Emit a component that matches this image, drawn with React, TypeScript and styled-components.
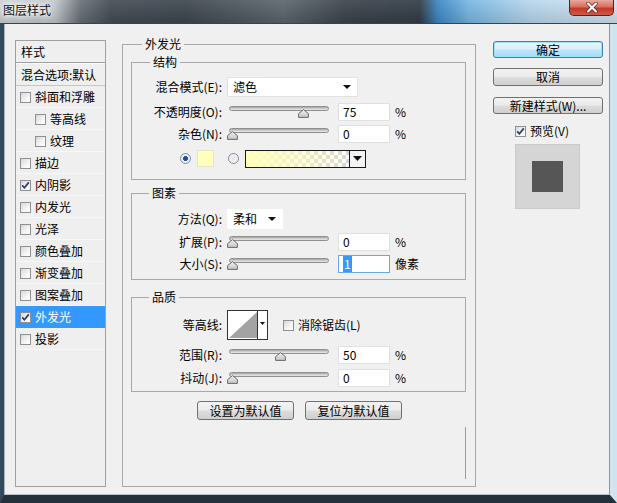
import React from 'react';
import styled, { createGlobalStyle } from 'styled-components';

const GlobalStyle = createGlobalStyle`
  html, body {
    margin: 0;
    padding: 0;
    background: #25313d;
  }
  body {
    width: 617px;
    height: 503px;
    overflow: hidden;
    font-family: "Noto Sans CJK SC", "Noto Sans", sans-serif;
    font-size: 12px;
    line-height: 16px;
    color: #000;
  }
  * {
    box-sizing: border-box;
  }
`;

const Window = styled.div`
  width: 617px;
  height: 503px;
  display: flex;
  flex-direction: column;
`;

const TitleBar = styled.div`
  height: 24px;
  flex-shrink: 0;
  display: flex;
  align-items: flex-start;
  border-bottom: 1px solid #3a434d;
  background:
    linear-gradient(to bottom, rgba(255, 255, 255, 0.08), rgba(0, 0, 0, 0.12)),
    linear-gradient(
      to right,
      #cdd1d5 0%,
      #c2c7cc 9%,
      #6a7178 13%,
      #444c55 18%,
      #3e464f 30%,
      #5d666e 46%,
      #3b434c 56%,
      #333c46 68%,
      #3c89c6 71%,
      #79b8e3 76%,
      #b9d8ee 86%,
      #d3e5f2 100%
    );
`;

const Title = styled.span`
  margin: 3px 0 0 3px;
  font-size: 12px;
  line-height: 14px;
  color: #111;
  text-shadow: 0 0 4px #fff, 0 0 6px #fff, 0 0 8px #fff;
`;

const CloseButton = styled.div`
  margin-left: auto;
  margin-right: 3px;
  width: 45px;
  height: 16px;
  border: 1px solid #5e1f1a;
  border-top: none;
  border-radius: 0 0 5px 5px;
  background: linear-gradient(to bottom, #e9a89e 0%, #d6705f 45%, #c4372a 55%, #d05a44 100%);
  display: flex;
  align-items: center;
  justify-content: center;
`;

const Frame = styled.div`
  flex: 1;
  display: flex;
  border-left: 4px solid #34495e;
  border-right: 7px solid #d2e3f0;
  border-bottom: 8px solid #24303c;
`;

const Client = styled.div`
  flex: 1;
  display: flex;
  align-items: flex-start;
  padding: 12px 6px 0 10px;
  background: #f0f0f0;
  border-left: 1px solid #a8b0b8;
  border-right: 1px solid #8a97a4;
  border-bottom: 1px solid #b7c0c9;
`;

/* ---------- left list ---------- */

const StyleList = styled.div`
  width: 91px;
  height: 447px;
  margin-top: 4px;
  flex-shrink: 0;
  border: 1px solid #a0a0a0;
  background: #efefef;
`;

const ListHeader = styled.div`
  height: 22px;
  padding-left: 5px;
  display: flex;
  align-items: center;
  border-bottom: 1px solid #a0a0a0;
`;

const BlendRow = styled.div`
  height: 23px;
  padding-left: 5px;
  display: flex;
  align-items: center;
  border-top: 1px solid #fafafa;
  border-bottom: 1px solid #c6c6c6;
  white-space: nowrap;
`;

const ListItem = styled.div<{ $indent: boolean; $selected: boolean }>`
  height: 22px;
  display: flex;
  align-items: center;
  padding-left: ${(p) => (p.$indent ? 19 : 4)}px;
  background: ${(p) => (p.$selected ? '#3399ff' : 'transparent')};
  color: ${(p) => (p.$selected ? '#fff' : '#000')};
  box-shadow: inset 0 -1px 0 ${(p) => (p.$selected ? '#3399ff' : '#f8f8f8')};
`;

const Box = styled.span<{ $gap?: number; $ml?: number }>`
  width: 11px;
  height: 11px;
  flex-shrink: 0;
  margin-left: ${(p) => p.$ml ?? 0}px;
  margin-right: ${(p) => p.$gap ?? 4}px;
  border: 1px solid #8e8f8f;
  background: linear-gradient(135deg, #d8d8d8 0%, #f4f4f4 60%, #ffffff 100%);
  display: flex;
  align-items: center;
  justify-content: center;
`;

const CheckBox: React.FC<{ checked?: boolean; gap?: number; ml?: number }> = ({ checked, gap, ml }) => (
  <Box $gap={gap} $ml={ml}>
    {checked && (
      <svg width="9" height="9" viewBox="0 0 9 9">
        <path d="M1.2 4.4 L3.4 6.8 L7.8 1.4" fill="none" stroke="#2a3a66" strokeWidth="1.7" />
      </svg>
    )}
  </Box>
);

/* ---------- group boxes ---------- */

const Group = styled.fieldset<{ $mt?: number }>`
  margin: ${(p) => p.$mt ?? 0}px 0 0 0;
  padding: 0;
  min-width: 0;
  border: 1px solid #a8a8a8;
`;

const GroupTitle = styled.legend<{ $indent: number }>`
  margin-left: ${(p) => p.$indent}px;
  padding: 0 3px;
  font-size: 12px;
  line-height: 16px;
`;

const GroupBody = styled.div<{ $pad: string }>`
  display: flex;
  flex-direction: column;
  padding: ${(p) => p.$pad};
`;

const MainColumn = styled.div`
  width: 354px;
  margin-left: 16px;
  flex-shrink: 0;
`;

const Row = styled.div<{ $mt: number; $h?: number; $pl?: number }>`
  display: flex;
  align-items: center;
  height: ${(p) => p.$h ?? 21}px;
  margin-top: ${(p) => p.$mt}px;
  padding-left: ${(p) => p.$pl ?? 0}px;
  white-space: nowrap;
`;

const Label = styled.span`
  width: 90px;
  flex-shrink: 0;
  margin-right: 5px;
  text-align: right;
`;

const Select = styled.div<{ $w: number }>`
  width: ${(p) => p.$w}px;
  height: 20px;
  display: flex;
  align-items: center;
  padding: 0 6px 0 5px;
  background: #fff;
  border: 1px solid ${(p) => (p.$w > 80 ? '#e2e2e2' : '#fff')};
`;

const SelectArrow = styled.span`
  margin-left: auto;
  width: 0;
  height: 0;
  border-left: 4px solid transparent;
  border-right: 4px solid transparent;
  border-top: 4px solid #111;
`;

const SliderWrap = styled.div`
  position: relative;
  width: 104px;
  height: 13px;
  flex-shrink: 0;
`;

const Track = styled.div`
  position: absolute;
  left: 2px;
  right: 2px;
  top: 1px;
  height: 5px;
  border: 1px solid #8f8f8f;
  border-radius: 3px;
  background: linear-gradient(to bottom, #a4a4a4 0%, #cfcfcf 55%, #ececec 100%);
`;

const Thumb = styled.svg`
  position: absolute;
  top: 4px;
`;

const Slider: React.FC<{ value: number }> = ({ value }) => (
  <SliderWrap>
    <Track />
    <Thumb width="11" height="9" viewBox="0 0 11 9" style={{ left: `${value * 0.95}px` }}>
      <defs>
        <linearGradient id="thumbFill" x1="0" y1="0" x2="0" y2="1">
          <stop offset="0" stopColor="#f2f2f2" />
          <stop offset="1" stopColor="#c4c4c4" />
        </linearGradient>
      </defs>
      <path d="M5.5 0.6 L10.4 4.6 L10.4 8.4 L0.6 8.4 L0.6 4.6 Z" fill="url(#thumbFill)" stroke="#6a6a6a" strokeWidth="1" />
    </Thumb>
  </SliderWrap>
);

const Field = styled.div<{ $focused?: boolean }>`
  width: 52px;
  height: 18px;
  margin-left: 7px;
  padding-left: 4px;
  display: flex;
  align-items: center;
  background: #fff;
  border: 1px solid ${(p) => (p.$focused ? '#6aa6e0' : '#e0e0e0')};
`;

const Selected = styled.span`
  background: #3399ff;
  color: #fff;
  padding: 0 1px;
`;

const Unit = styled.span`
  margin-left: 5px;
`;

const Radio = styled.span<{ $on: boolean; $ml: number }>`
  width: 11px;
  height: 11px;
  flex-shrink: 0;
  margin-left: ${(p) => p.$ml}px;
  border-radius: 50%;
  border: 1px solid #7f8a96;
  background: ${(p) =>
    p.$on
      ? 'radial-gradient(circle, #1f3f78 0%, #2c5aa0 35%, #e8eef6 40%, #f6f6f6 100%)'
      : 'radial-gradient(circle, #e6e6e6 0%, #fafafa 100%)'};
`;

const Swatch = styled.span`
  width: 17px;
  height: 17px;
  margin-left: 6px;
  background: #ffffbe;
  border: 1px solid #e4e4c8;
`;

const GradientBar = styled.div`
  margin-left: 6px;
  width: 121px;
  height: 18px;
  display: flex;
  border: 1px solid #1a1a1a;
`;

const GradientFill = styled.div`
  flex: 1;
  background:
    linear-gradient(to right, #ffffbc 0%, rgba(255, 255, 188, 0.55) 55%, rgba(255, 255, 188, 0) 100%),
    repeating-conic-gradient(#d6d6d6 0% 25%, #ffffff 0% 50%) 0 0 / 8px 8px;
`;

const GradientArrow = styled.div`
  width: 16px;
  border-left: 1px solid #1a1a1a;
  background: #f4f4f4;
  display: flex;
  align-items: center;
  justify-content: center;
`;

const ContourBox = styled.div`
  width: 41px;
  height: 30px;
  flex-shrink: 0;
  border: 1px solid #333;
  background: #fff;
  display: flex;
`;

const PlainButton = styled.div<{ $w: number; $h: number }>`
  width: ${(p) => p.$w}px;
  height: ${(p) => p.$h}px;
  border: 1px solid #707070;
  border-radius: 3px;
  background: linear-gradient(to bottom, #f2f2f2 0%, #ebebeb 48%, #dddddd 52%, #cfcfcf 100%);
  display: flex;
  align-items: center;
  justify-content: center;
  line-height: 14px;
  white-space: nowrap;
`;

const DefaultButton = styled(PlainButton)`
  border-color: #3c7fb1;
  background: linear-gradient(to bottom, #eaf6fd 0%, #d9f0fc 48%, #bee6fd 52%, #a7d9f5 100%);
  box-shadow: inset 0 0 0 1px #9ee4f7;
`;

const ButtonRow = styled.div`
  display: flex;
  justify-content: center;
  gap: 11px;
  margin-top: 9px;
  padding-left: 2px;
`;

const SideRule = styled.div`
  align-self: flex-end;
  width: 1px;
  height: 52px;
  margin-top: 7px;
  background: #9a9a9a;
`;

/* ---------- right column ---------- */

const RightColumn = styled.div`
  width: 110px;
  margin-left: 17px;
  margin-top: 5px;
  flex-shrink: 0;
  display: flex;
  flex-direction: column;
`;

const ButtonSpacer = styled.div<{ $h: number }>`
  height: ${(p) => p.$h}px;
`;

const PreviewToggle = styled.div`
  display: flex;
  align-items: center;
  height: 16px;
  margin-top: 9px;
  padding-left: 22px;
`;

const PreviewBox = styled.div`
  width: 65px;
  height: 65px;
  margin: 5px 0 0 22px;
  background: #d5d5d5;
  border: 1px solid #cacaca;
  display: flex;
  align-items: center;
  justify-content: center;
`;

const PreviewSquare = styled.div`
  width: 31px;
  height: 31px;
  background: #565656;
`;

const styleItems = [
  { label: '斜面和浮雕' },
  { label: '等高线', indent: true },
  { label: '纹理', indent: true },
  { label: '描边' },
  { label: '内阴影', checked: true },
  { label: '内发光' },
  { label: '光泽' },
  { label: '颜色叠加' },
  { label: '渐变叠加' },
  { label: '图案叠加' },
  { label: '外发光', checked: true, selected: true },
  { label: '投影' },
];

const DownTriangle = () => (
  <svg width="9" height="5" viewBox="0 0 9 5">
    <path d="M0 0 L9 0 L4.5 5 Z" fill="#111" />
  </svg>
);

const App: React.FC = () => {
  return (
    <>
      <GlobalStyle />
      <Window>
        <TitleBar>
          <Title>图层样式</Title>
          <CloseButton>
            <svg width="14" height="11" viewBox="0 0 14 11">
              <path d="M3 1.5 L11 9.5 M11 1.5 L3 9.5" stroke="#5a1510" strokeWidth="3.4" strokeLinecap="round" />
              <path d="M3 1.5 L11 9.5 M11 1.5 L3 9.5" stroke="#ffffff" strokeWidth="2.2" strokeLinecap="round" />
            </svg>
          </CloseButton>
        </TitleBar>
        <Frame>
          <Client>
            <StyleList>
              <ListHeader>样式</ListHeader>
              <BlendRow>混合选项:默认</BlendRow>
              {styleItems.map((item) => (
                <ListItem key={item.label} $indent={!!item.indent} $selected={!!item.selected}>
                  <CheckBox checked={item.checked} />
                  {item.label}
                </ListItem>
              ))}
            </StyleList>

            <MainColumn>
              <Group>
                <GroupTitle $indent={19}>外发光</GroupTitle>
                <GroupBody $pad="0 9px 7px 8px">
                  <Group $mt={2}>
                    <GroupTitle $indent={18}>结构</GroupTitle>
                    <GroupBody $pad="0 0 10px 0">
                      <Row $mt={6}>
                        <Label>混合模式(E):</Label>
                        <Select $w={131}>
                          滤色
                          <SelectArrow />
                        </Select>
                      </Row>
                      <Row $mt={4}>
                        <Label>不透明度(O):</Label>
                        <Slider value={75} />
                        <Field>75</Field>
                        <Unit>%</Unit>
                      </Row>
                      <Row $mt={1}>
                        <Label>杂色(N):</Label>
                        <Slider value={0} />
                        <Field>0</Field>
                        <Unit>%</Unit>
                      </Row>
                      <Row $mt={4} $pl={48}>
                        <Radio $on={true} $ml={0} />
                        <Swatch />
                        <Radio $on={false} $ml={14} />
                        <GradientBar>
                          <GradientFill />
                          <GradientArrow>
                            <DownTriangle />
                          </GradientArrow>
                        </GradientBar>
                      </Row>
                    </GroupBody>
                  </Group>

                  <Group $mt={5}>
                    <GroupTitle $indent={17}>图素</GroupTitle>
                    <GroupBody $pad="0 0 5px 0">
                      <Row $mt={7}>
                        <Label>方法(Q):</Label>
                        <Select $w={56}>
                          柔和
                          <SelectArrow />
                        </Select>
                      </Row>
                      <Row $mt={2}>
                        <Label>扩展(P):</Label>
                        <Slider value={0} />
                        <Field>0</Field>
                        <Unit>%</Unit>
                      </Row>
                      <Row $mt={1}>
                        <Label>大小(S):</Label>
                        <Slider value={0} />
                        <Field $focused>
                          <Selected>1</Selected>
                        </Field>
                        <Unit>像素</Unit>
                      </Row>
                    </GroupBody>
                  </Group>

                  <Group $mt={9}>
                    <GroupTitle $indent={17}>品质</GroupTitle>
                    <GroupBody $pad="0 0 3px 0">
                      <Row $mt={4} $h={32}>
                        <Label>等高线:</Label>
                        <ContourBox>
                          <svg width="39" height="28" viewBox="0 0 39 28">
                            <path d="M1 27 L29 1 L29 27 Z" fill="#a3a3a3" />
                            <path d="M29.5 0 L29.5 28" stroke="#333" strokeWidth="1" />
                            <path d="M32 11 L37 11 L34.5 14 Z" fill="#111" />
                          </svg>
                        </ContourBox>
                        <CheckBox gap={4} ml={15} />
                        消除锯齿(L)
                      </Row>
                      <Row $mt={3}>
                        <Label>范围(R):</Label>
                        <Slider value={50} />
                        <Field>50</Field>
                        <Unit>%</Unit>
                      </Row>
                      <Row $mt={2}>
                        <Label>抖动(J):</Label>
                        <Slider value={0} />
                        <Field>0</Field>
                        <Unit>%</Unit>
                      </Row>
                    </GroupBody>
                  </Group>

                  <ButtonRow>
                    <PlainButton $w={97} $h={19}>设置为默认值</PlainButton>
                    <PlainButton $w={97} $h={19}>复位为默认值</PlainButton>
                  </ButtonRow>
                  <SideRule />
                </GroupBody>
              </Group>
            </MainColumn>

            <RightColumn>
              <DefaultButton $w={110} $h={17}>确定</DefaultButton>
              <ButtonSpacer $h={10} />
              <PlainButton $w={110} $h={18}>取消</PlainButton>
              <ButtonSpacer $h={11} />
              <PlainButton $w={110} $h={17}>新建样式(W)...</PlainButton>
              <PreviewToggle>
                <CheckBox checked />
                预览(V)
              </PreviewToggle>
              <PreviewBox>
                <PreviewSquare />
              </PreviewBox>
            </RightColumn>
          </Client>
        </Frame>
      </Window>
    </>
  );
};

export default App;
